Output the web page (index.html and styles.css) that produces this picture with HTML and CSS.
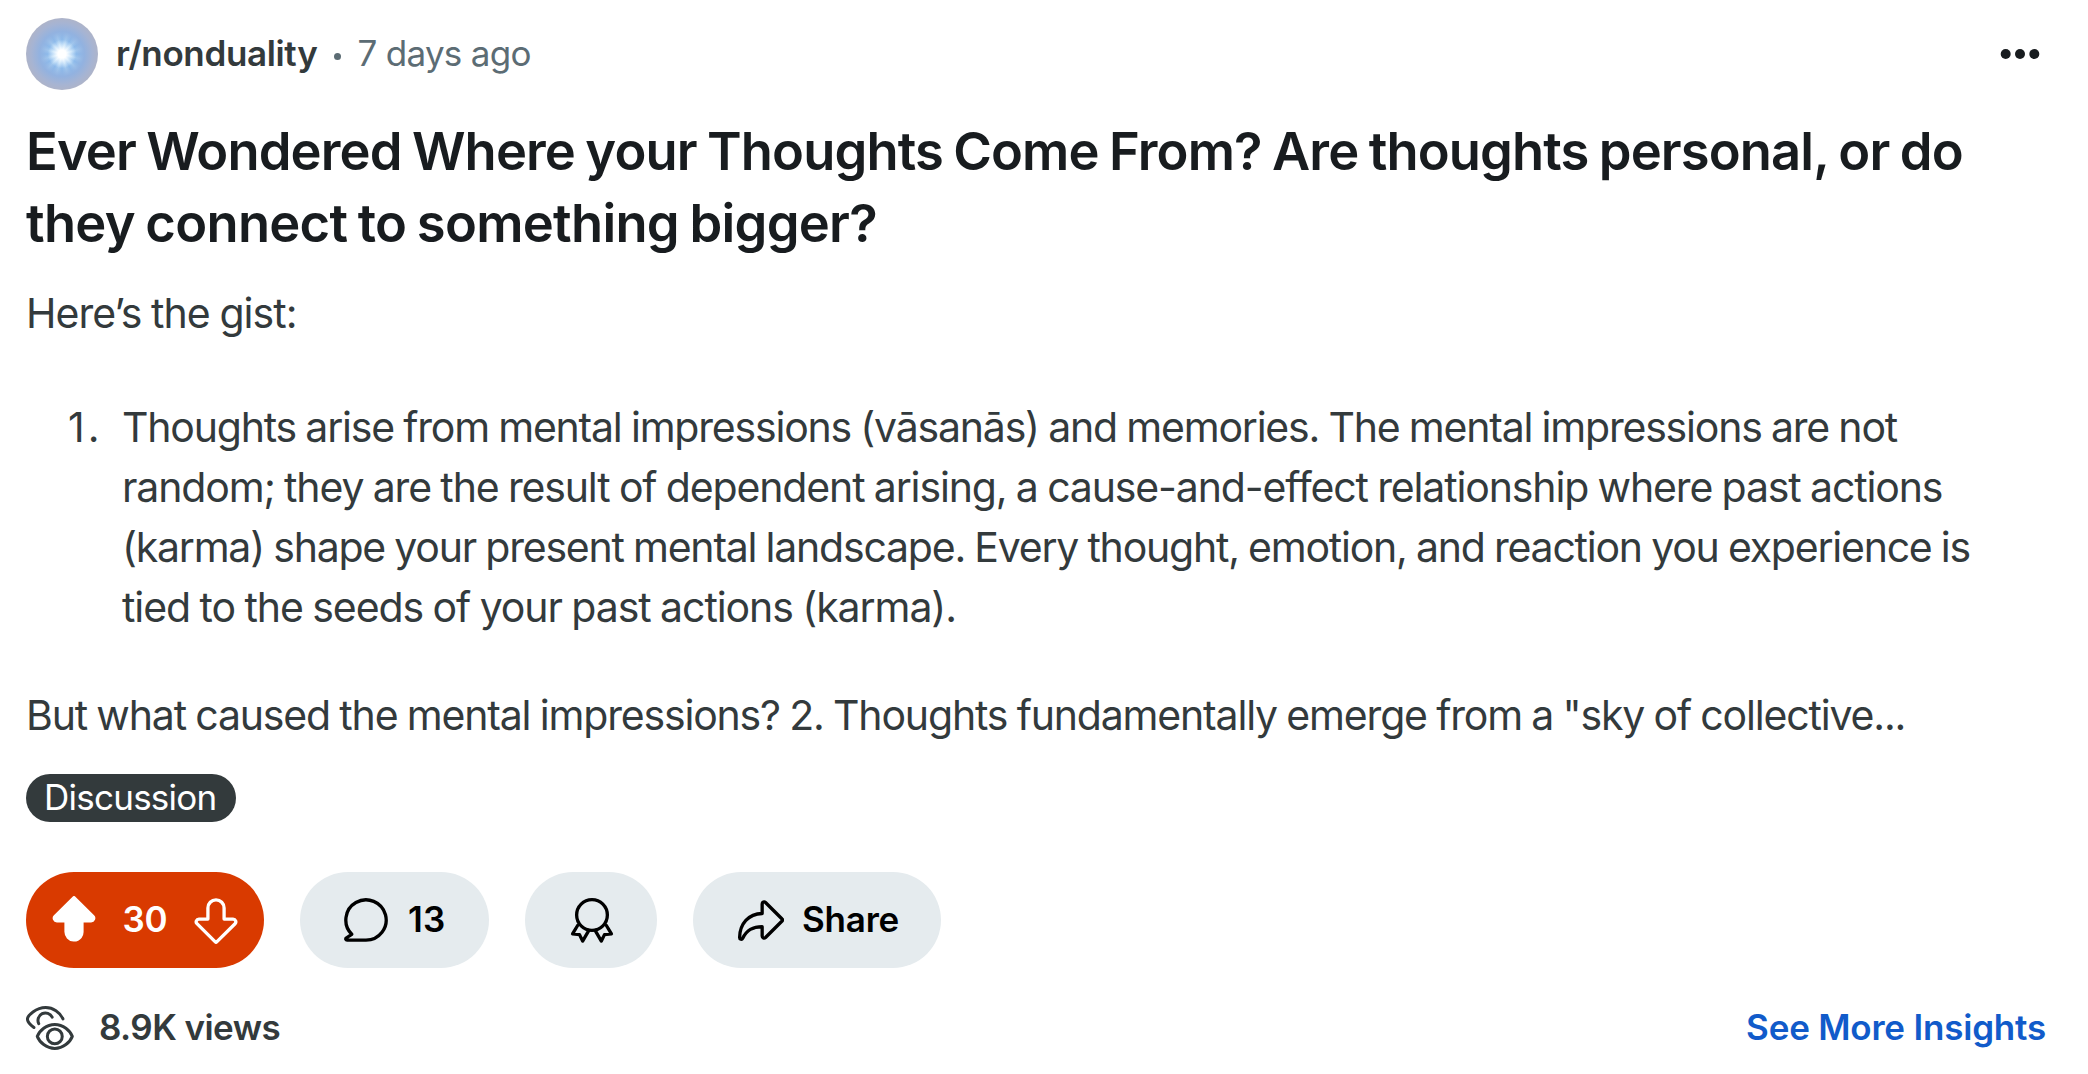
FILE: index.html
```html
<!DOCTYPE html>
<html lang="en">
<head>
<meta charset="utf-8">
<title>r/nonduality</title>
<link rel="stylesheet" href="styles.css">
</head>
<body>
<article class="post">
  <header class="head">
    <span class="avatar"></span>
    <span class="sub">r/nonduality</span>
    <span class="sep"></span>
    <span class="time">7 days ago</span>
    <svg class="more" viewBox="0 0 40 12"><circle cx="5.7" cy="6" r="5"/><circle cx="20" cy="6" r="5"/><circle cx="34.3" cy="6" r="5"/></svg>
  </header>
  <h1 class="title"><span class="line">Ever Wondered Where your Thoughts Come From? Are thoughts personal, or do</span> <span class="line last">they connect to something bigger?</span></h1>
  <div class="body">
    <p class="text"><span class="line intro">Here’s the gist:</span></p>
    <ol class="list">
      <li class="item"><span class="num">1.</span><div><span class="line first">Thoughts arise from mental impressions (vāsanās) and memories. The mental impressions are not</span> <span class="line second">random; they are the result of dependent arising, a cause-and-effect relationship where past actions</span> <span class="line third">(karma) shape your present mental landscape. Every thought, emotion, and reaction you experience is</span> <span class="line fourth">tied to the seeds of your past actions (karma).</span></div></li>
    </ol>
    <p class="text"><span class="line outro">But what caused the mental impressions? 2. Thoughts fundamentally emerge from a "sky of collective...</span></p>
  </div>
  <span class="flair">Discussion</span>
  <div class="actions">
    <div class="pill vote">
      <svg class="icon" viewBox="0 0 20 20"><path fill="currentColor" d="M10 19c-.072 0-.145 0-.218-.006A4.1 4.1 0 0 1 6 14.816V11H2.862a1.751 1.751 0 0 1-1.234-2.993L9.41.28a.836.836 0 0 1 1.18 0l7.782 7.727A1.751 1.751 0 0 1 17.139 11H14v3.882a4.134 4.134 0 0 1-.854 2.592A3.99 3.99 0 0 1 10 19"/></svg>
      <span class="label">30</span>
      <svg class="icon line-icon" viewBox="0 0 20 20"><path d="M10 1.63C8.1 1.63 6.63 3.1 6.63 5V9.63H2.86c-1 0-1.5 1.2-.8 1.92L9.8 19.2a.3.3 0 0 0 .4 0l7.74-7.65c.7-.72.2-1.92-.8-1.92H13.37V5C13.37 3.1 11.9 1.63 10 1.63Z"/></svg>
    </div>
    <div class="pill comments">
      <svg class="icon line-icon" viewBox="0 0 20 20"><path d="M10 18.4H2.1c-.5 0-.7-.55-.35-.9L4.06 15.94A8.4 8.4 0 1 1 10 18.4Z"/></svg>
      <span class="label">13</span>
    </div>
    <div class="pill award">
      <svg class="icon line-icon" viewBox="0 0 20 20"><circle cx="10" cy="7.9" r="6.4"/><path d="M4 12.3 1.9 15.8l2.9.3 1.3 2.7 2.6-4.5M16 12.3l2.1 3.5-2.9.3-1.3 2.7-2.6-4.5"/></svg>
    </div>
    <div class="pill share">
      <svg class="icon line-icon" viewBox="0 0 20 20"><path d="M10.9 7.3V3.3c0-.75.85-1.1 1.4-.6L19.2 9.6a.55.55 0 0 1 0 .8l-6.9 6.9c-.55.5-1.4.15-1.4-.6V12.8C6.8 12.8 4.5 14.2 2.8 17.6c-.35.7-1.3.5-1.3-.3C1.6 11.6 5.2 7.4 10.9 7.3Z"/></svg>
      <span class="label">Share</span>
    </div>
  </div>
  <footer class="foot">
    <svg class="icon line-icon eyes" viewBox="0 0 20 20"><path d="M3.3 9.8C1.8 8.7.6 7.3.6 6.3.6 4.8 4.2 1.5 8.2 1.5c3.1 0 5.9 1.9 7.2 4.7M5.3 8.2A3.1 3.1 0 1 1 10.9 5.5"/><path d="M4.7 13.5C5.6 11.1 8.5 8.5 12 8.5s6.4 2.6 7.3 5c-.9 2.4-3.8 5-7.3 5s-6.4-2.6-7.3-5Z"/><circle cx="12" cy="13.5" r="3.1"/></svg>
    <span class="views">8.9K views</span>
    <a class="insights">See More Insights</a>
  </footer>
</article>
</body>
</html>
```
FILE: styles.css
```css
* { box-sizing: border-box; }
body { margin: 0; background: #fff; color: #333a3c; font-family: Inter, "Liberation Sans", sans-serif; }
.post { width: 2088px; height: 1074px; padding: 18px 42px 0 26px; display: flex; flex-direction: column; }
.line { display: inline-block; white-space: nowrap; }
.head { height: 72px; display: flex; align-items: center; font-size: 35px; white-space: nowrap; }
.avatar {
  width: 72px; height: 72px; border-radius: 50%;
  background:
    radial-gradient(circle, #fff 0 8%, rgba(255,255,255,0) 28%),
    radial-gradient(circle, rgba(140,178,228,0) 10%, #92b2e0 44%, #a6b4d3 60%, #aeb4c9 71%),
    repeating-conic-gradient(#86c2f6 0deg, #b4e0fd 15deg, #86c2f6 30deg);
}
.sub { margin-left: 18px; padding-bottom: 2px; font-weight: 600; letter-spacing: -.35px; }
.sep { width: 7px; height: 7px; margin: 4px 16px 0 17px; border-radius: 50%; background: #5c6c74; }
.time { padding-bottom: 2px; color: #5c6c74; letter-spacing: -.68px; }
.more { width: 40px; height: 12px; margin: 0 6px 0 auto; fill: #181c1f; }
.title { margin: 25px 0 0; font-size: 52.5px; line-height: 72px; font-weight: 600; letter-spacing: -.88px; word-spacing: -2px; color: #181c1f; }
.last { letter-spacing: -.72px; }
.body { margin-top: 24px; font-size: 41px; line-height: 60px; word-spacing: -1px; }
.text { margin: 0; }
.list { list-style: none; margin: 54px 0 48px; padding: 0; }
.item { display: flex; }
.num { flex: none; width: 96px; padding-left: 42px; letter-spacing: 3px; }
.intro { letter-spacing: -.95px; }
.first { letter-spacing: -1.2px; }
.second { letter-spacing: -1.14px; }
.third { letter-spacing: -1.22px; }
.fourth { letter-spacing: -1.07px; }
.outro { letter-spacing: -1.17px; }
.flair { align-self: flex-start; width: 210px; height: 48px; margin-top: 29px; padding-left: 18px; border-radius: 24px; background: #333a3c; color: #fff; font-size: 35px; line-height: 46px; letter-spacing: -.75px; }
.actions { display: flex; gap: 36px; margin-top: 50px; }
.pill { height: 96px; border-radius: 48px; display: flex; align-items: center; background: #e5ebee; color: #000; font-size: 35px; font-weight: 600; }
.label { padding-bottom: 2px; letter-spacing: -.2px; }
.icon { width: 48px; height: 48px; flex: none; display: block; }
.line-icon { fill: none; stroke: currentColor; stroke-width: 1.38; stroke-linejoin: round; stroke-linecap: round; }
.eyes { stroke-width: 1.25; }
.vote { width: 238px; padding: 0 24px; justify-content: space-between; background: #d93a00; color: #fff; }
.comments { width: 189px; padding-left: 42px; gap: 18px; }
.comments .label { letter-spacing: .3px; }
.award { width: 132px; padding-left: 2px; justify-content: center; }
.share { width: 248px; padding-left: 43px; gap: 18px; }
.foot { height: 48px; margin-top: 36px; display: flex; align-items: center; font-size: 35px; font-weight: 600; }
.views { margin-left: 25px; padding-bottom: 2px; letter-spacing: -.55px; }
.insights { margin-left: auto; padding-bottom: 2px; letter-spacing: -.2px; color: #115bca; }
```
